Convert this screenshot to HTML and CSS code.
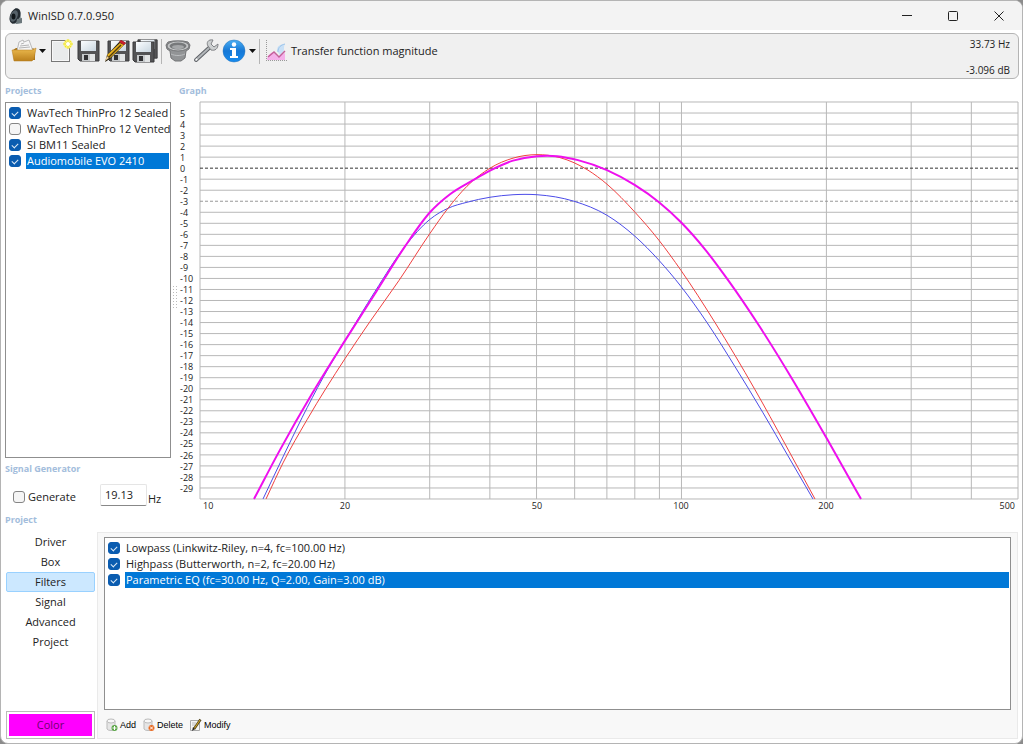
FILE: index.html
```html
<!DOCTYPE html>
<html lang="en">
<head>
<meta charset="utf-8">
<title>WinISD 0.7.0.950</title>
<link rel="stylesheet" href="styles.css">
</head>
<body>
<div class="window">
  <header class="titlebar">
    <svg class="app-icon" width="16" height="18" viewBox="0 0 16 18"><path d="M7 1l5 2 2 13-8 1z" fill="#9aa6aa"/><ellipse cx="7" cy="9" rx="5" ry="8" fill="#252c32" transform="rotate(22 7 9)"/><ellipse cx="6" cy="9" rx="3.500" ry="6" fill="#566169" transform="rotate(22 6 9)"/><ellipse cx="5.500" cy="9.500" rx="2" ry="3" fill="#11161a"/><path d="M9 12l5-1v5l-6 1z" fill="#6c787c"/></svg>
    <h1 class="title">WinISD 0.7.0.950</h1>
    <div class="window-controls">
      <button type="button" aria-label="Minimize"><svg width="12" height="12" viewBox="0 0 12 12"><path d="M1 5.500h10"/></svg></button>
      <button type="button" aria-label="Maximize"><svg width="12" height="12" viewBox="0 0 12 12"><rect x="1.500" y="1.500" width="9" height="9" rx="1"/></svg></button>
      <button type="button" aria-label="Close"><svg width="12" height="12" viewBox="0 0 12 12"><path d="M1.500 1.500l9 9m0-9l-9 9"/></svg></button>
    </div>
  </header>

  <div class="toolbar">
    <div class="tools">
      <button type="button" class="tool" aria-label="Open project">
        <svg width="26" height="26" viewBox="0 0 26 26"><defs><linearGradient id="gold" x1="0" y1="0" x2="0" y2="1"><stop offset="0" stop-color="#eebc50"/><stop offset="1" stop-color="#bb801c"/></linearGradient></defs><path d="M2 12l3-2h17l2 2v10H3z" fill="#a8751c"/><path d="M6 13l2-9 4-2 1 2 5-2 4 11z" fill="#f6f6f6" stroke="#b9b9b9"/><path d="M10 6l3-1M9 8l9-1M8 10l11-1" stroke="#b5b5b5"/><path d="M1 12h20l4-2-2 11-2 2H3z" fill="url(#gold)" stroke="#b57d20" stroke-width=".5"/></svg>
        <svg class="caret" width="7" height="4" viewBox="0 0 7 4"><path d="M0 0h7L3.500 4z"/></svg>
      </button>
      <button type="button" class="tool" aria-label="New project">
        <svg width="26" height="26" viewBox="0 0 26 26"><rect x="3.500" y="2.500" width="18" height="21" fill="#f7f7f7" stroke="#777"/><rect x="5" y="4" width="15" height="18" fill="#e9ebec"/><circle cx="20" cy="6" r="4.500" fill="#fbf27a"/><path d="M20 1v10M15 6h10M17 3l6 6m0-6l-6 6" stroke="#ece330"/><circle cx="20" cy="6" r="2" fill="#fff"/></svg>
      </button>
      <button type="button" class="tool" aria-label="Save">
        <svg width="26" height="26" viewBox="0 0 26 26"><defs><linearGradient id="label" x1="0" y1="0" x2="1" y2="1"><stop offset="0" stop-color="#fbfdff"/><stop offset="1" stop-color="#c9d6e0"/></linearGradient><symbol id="disk" viewBox="0 0 24 24"><path d="M1 2h21v20H3l-2-2z" fill="#535355" stroke="#3a3a3c"/><path d="M4 2h15v10H4z" fill="url(#label)"/><path d="M5 15h13v7H5z" fill="#c6c9cb"/><path d="M7 16h4v5H7z" fill="#303033"/><path d="M13 15h5v7h-5z" fill="#e2e4e5"/></symbol></defs><use href="#disk" x="1" y="1" width="24" height="24"/></svg>
      </button>
      <button type="button" class="tool" aria-label="Save as">
        <svg width="26" height="26" viewBox="0 0 26 26"><use href="#disk" x="3" y="1" width="24" height="24"/><path d="M17 2l5 3L6 21l-5 3 2-7z" fill="#2b2414"/><path d="M16 5l4 2L6 20l-3-3z" fill="#e8b321"/><path d="M17 7L5 19" stroke="#543c0e" stroke-width="1.500"/><path d="M17 2l5 3-2 2-5-3z" fill="#c91e2d"/><path d="M3 18l2 2-4 3z" fill="#f1d29a"/></svg>
      </button>
      <button type="button" class="tool" aria-label="Save all">
        <svg width="26" height="26" viewBox="0 0 26 26"><use href="#disk" x="5" y="0" width="22" height="22"/><use href="#disk" x="0" y="2" width="24" height="24"/></svg>
      </button>
      <span class="separator"></span>
      <button type="button" class="tool" aria-label="Driver editor">
        <svg width="26" height="26" viewBox="0 0 26 26"><path d="M1 7l2-3 5-1h10l5 1 2 3-1 4-3 2-1 7-4 3h-6l-4-3-1-7-3-2z" fill="#929496" stroke="#737476"/><ellipse cx="13" cy="8" rx="11" ry="5" fill="#c4c6c7" stroke="#757678"/><ellipse cx="13" cy="8" rx="8.500" ry="3.500" fill="#77797b"/><ellipse cx="13" cy="9" rx="6" ry="2" fill="#a5a7a9"/><path d="M6 16c4 2 10 2 14 0" fill="none" stroke="#bbbdbf"/></svg>
      </button>
      <button type="button" class="tool" aria-label="Options">
        <svg width="26" height="26" viewBox="0 0 26 26"><path d="M3 22L16 10" stroke="#606368" stroke-width="4" stroke-linecap="round"/><path d="M3 22L16 10" stroke="#b2b6b9" stroke-width="2" stroke-linecap="round"/><path d="M20 2c-5-1-7 3-5 6l3 4c4 1 7-1 7-6l-4 3-3-3z" fill="#cdd0d1" stroke="#808286"/><circle cx="3.500" cy="21.500" r="1" fill="#fff"/></svg>
      </button>
      <button type="button" class="tool" aria-label="Information">
        <svg width="26" height="26" viewBox="0 0 26 26"><defs><linearGradient id="blue" x1="0" y1="0" x2="0" y2="1"><stop offset="0" stop-color="#4baef2"/><stop offset=".5" stop-color="#1678d6"/><stop offset="1" stop-color="#168bee"/></linearGradient></defs><circle cx="13" cy="13" r="11" fill="url(#blue)" stroke="#2772bb" stroke-width=".5"/><circle cx="13" cy="6.500" r="2.200" fill="#fff"/><path d="M9 10h6v8h2v2H9v-2h2v-6H9z" fill="#fff"/></svg>
        <svg class="caret" width="7" height="4" viewBox="0 0 7 4"><path d="M0 0h7L3.500 4z"/></svg>
      </button>
      <span class="separator"></span>
      <button type="button" class="tool chart-kind">
        <svg width="26" height="26" viewBox="0 0 26 26"><path d="M4 21c1-4 3-6 6-7l5 5 7-4v7H4z" fill="#f5b0ea"/><path d="M14 13c0-5 3-7 8-7-2 3 0 6-2 8l-3 3z" fill="#c9e0f6"/><path d="M5 19l6-5 5 5 6-6" fill="none" stroke="#c4609a" stroke-width="1.500"/><path d="M15 14c0-5 3-7 7-8" fill="none" stroke="#9cc4ea"/><path d="M3.500 2v20M3 22.500h21" stroke="#999" stroke-dasharray="1 1"/></svg>
        <span>Transfer function magnitude</span>
      </button>
    </div>
    <div class="readout"><output>33.73 Hz</output><output>-3.096 dB</output></div>
  </div>

  <main class="content">
    <section class="upper">
      <div class="side">
        <h2 class="caption">Projects</h2>
        <div class="listbox projects">
          <label class="item"><input type="checkbox" class="check" checked><span>WavTech ThinPro 12 Sealed</span></label>
          <label class="item"><input type="checkbox" class="check"><span>WavTech ThinPro 12 Vented</span></label>
          <label class="item"><input type="checkbox" class="check" checked><span>SI BM11 Sealed</span></label>
          <label class="item selected"><input type="checkbox" class="check" checked><span>Audiomobile EVO 2410</span></label>
        </div>
        <h2 class="caption">Signal Generator</h2>
        <div class="generator">
          <label class="generate"><input type="checkbox" class="check"><span>Generate</span></label>
          <input type="text" id="frequency" class="frequency" value="19.13">
          <label for="frequency" class="unit">Hz</label>
        </div>
      </div>
      <div class="splitter"><span class="grip"></span></div>
      <div class="graph">
        <h2 class="caption graph-caption">Graph</h2>
        <div class="y-axis"><span>5</span><span>4</span><span>3</span><span>2</span><span>1</span><span>0</span><span>-1</span><span>-2</span><span>-3</span><span>-4</span><span>-5</span><span>-6</span><span>-7</span><span>-8</span><span>-9</span><span>-10</span><span>-11</span><span>-12</span><span>-13</span><span>-14</span><span>-15</span><span>-16</span><span>-17</span><span>-18</span><span>-19</span><span>-20</span><span>-21</span><span>-22</span><span>-23</span><span>-24</span><span>-25</span><span>-26</span><span>-27</span><span>-28</span><span>-29</span></div>
        <div class="plot"><svg id="plot" viewBox="200 102 818 396" preserveAspectRatio="none" role="img" aria-label="Transfer function magnitude"></svg></div>
        <div class="x-axis"><span class="f10">10</span><span class="f20">20</span><span class="f50">50</span><span class="f100">100</span><span class="f200">200</span><span class="f500">500</span></div>
      </div>
    </section>

    <section class="lower">
      <h2 class="caption">Project</h2>
      <div class="project">
        <nav class="tabs">
          <button type="button" class="tab">Driver</button>
          <button type="button" class="tab">Box</button>
          <button type="button" class="tab active">Filters</button>
          <button type="button" class="tab">Signal</button>
          <button type="button" class="tab">Advanced</button>
          <button type="button" class="tab">Project</button>
          <button type="button" class="color">Color</button>
        </nav>
        <div class="panel">
          <div class="listbox filters">
            <label class="item"><input type="checkbox" class="check" checked><span>Lowpass (Linkwitz-Riley, n=4, fc=100.00 Hz)</span></label>
            <label class="item"><input type="checkbox" class="check" checked><span>Highpass (Butterworth, n=2, fc=20.00 Hz)</span></label>
            <label class="item selected"><input type="checkbox" class="check" checked><span>Parametric EQ (fc=30.00 Hz, Q=2.00, Gain=3.00 dB)</span></label>
          </div>
          <div class="actions">
            <button type="button"><svg width="12" height="14" viewBox="0 0 12 14"><path d="M1 3v8c1 2 7 2 8 0V3" fill="#e6e6e6" stroke="#bbb"/><ellipse cx="5" cy="3" rx="4" ry="2" fill="#f8f8f8" stroke="#bbb"/><circle cx="8.500" cy="10" r="3" fill="#5aa646"/><path d="M6.500 10h4m-2-2v4" stroke="#fff"/></svg>Add</button>
            <button type="button"><svg width="12" height="14" viewBox="0 0 12 14"><path d="M1 3v8c1 2 7 2 8 0V3" fill="#e6e6e6" stroke="#bbb"/><ellipse cx="5" cy="3" rx="4" ry="2" fill="#f8f8f8" stroke="#bbb"/><circle cx="8.500" cy="10" r="3" fill="#e96c25"/><path d="M7 8.500l3 3m0-3l-3 3" stroke="#fff"/></svg>Delete</button>
            <button type="button"><svg width="12" height="14" viewBox="0 0 12 14"><path d="M.5 2.500h9v10h-9z" fill="#f5f5f5" stroke="#aaa"/><path d="M2 5h4M2 7h3" stroke="#bbb"/><path d="M10.500 1.500L4 11" stroke="#54471f" stroke-width="2.500"/><path d="M10 2L4 11" stroke="#d9aa22"/><path d="M3 9l2 2-3 2z" fill="#222"/></svg>Modify</button>
          </div>
        </div>
      </div>
    </section>
  </main>
</div>
<script src="graph.js"></script>
</body>
</html>
```
FILE: styles.css
```css
* { box-sizing: border-box; }

body {
  margin: 0;
  background: #8c8c8c;
  font: 11px/16px "Open Sans", "Noto Sans", sans-serif;
  color: #222;
}

button, input {
  margin: 0;
  padding: 0;
  font: inherit;
  color: inherit;
}

button {
  border: 0;
  background: none;
}

svg { display: block; flex: none; }

.window {
  display: flex;
  flex-direction: column;
  min-height: 100vh;
  border: 1px solid #b4b4b4;
  border-radius: 8px;
  background: #fff;
  overflow: hidden;
}

.titlebar {
  display: flex;
  align-items: center;
  height: 29px;
  padding-left: 7px;
  background: #f3f3f3;
}

.title {
  flex: 1;
  margin: 0 0 0 4px;
  font-size: 11px;
  font-weight: 400;
}

.window-controls { display: flex; }

.window-controls button {
  display: grid;
  place-items: center;
  width: 46px;
  height: 28px;
}

.window-controls path, .window-controls rect {
  fill: none;
  stroke: #222;
}

.toolbar {
  display: flex;
  justify-content: space-between;
  height: 46px;
  margin: 3px 3px 0 4px;
  border: 1px solid #b4b4b4;
  border-radius: 6px;
  background: #f0f0f0;
}

.tools {
  display: flex;
  align-items: center;
  gap: 2px;
  height: 34px;
  padding-left: 5px;
}

.tool {
  display: flex;
  align-items: center;
  gap: 2px;
}

.caret { fill: #111; }

.separator {
  width: 1px;
  height: 25px;
  margin: 0 1px;
  background: #b5b5b5;
}

.readout {
  display: flex;
  flex-direction: column;
  justify-content: space-between;
  padding: 2px 8px 0 0;
  font-size: 10px;
  text-align: right;
}

.content {
  display: flex;
  flex: 1;
  flex-direction: column;
  padding: 4px 4px 4px 4px;
}

.caption {
  margin: 0;
  font-size: 9px;
  font-weight: 700;
  line-height: 16px;
  color: #a3bddc;
}

.upper {
  display: flex;
  flex: 1;
}

.side {
  display: flex;
  flex-direction: column;
  width: 166px;
}

.listbox {
  border: 1px solid #8f8f8f;
  background: #fff;
  overflow: hidden;
}

.projects {
  flex: 1;
  margin: 3px 0;
  padding: 2px 1px 0 3px;
}

.item {
  display: flex;
  align-items: center;
  gap: 5px;
  height: 16px;
  white-space: nowrap;
}

.item span {
  flex: 1;
  padding-left: 1px;
}

.item.selected span {
  background: #0078d7;
  color: #fff;
}

.check {
  display: grid;
  flex: none;
  place-items: center;
  width: 12px;
  height: 12px;
  appearance: none;
  border: 1px solid #858585;
  border-radius: 3px;
  background: #f5f5f5;
}

.check:checked {
  border-color: #0a5cb0;
  background: #0a5cb0;
}

.check:checked::after {
  content: "";
  width: 5px;
  height: 3px;
  border: solid #dce9f6;
  border-width: 0 0 1px 1px;
  transform: rotate(-45deg);
}

.generator {
  display: flex;
  align-items: center;
  height: 35px;
  padding-left: 8px;
}

.generate {
  display: flex;
  align-items: center;
  gap: 3px;
  width: 87px;
  padding-top: 4px;
}

.frequency {
  width: 47px;
  height: 22px;
  padding-left: 4px;
  border: 1px solid #e5e5e5;
  border-bottom-color: #888;
  border-radius: 2px;
  background: #fff;
}

.unit { padding: 8px 0 0 1px; }

.splitter {
  display: grid;
  place-items: center;
  width: 8px;
}

.grip {
  width: 6px;
  height: 25px;
  background: radial-gradient(circle, #bbb 1px, transparent 1px) 0 0 / 3px 3px;
}

.graph {
  display: grid;
  flex: 1;
  grid-template: 19px 1fr 13px / 21px 1fr;
}

.graph-caption { grid-column: 1 / 3; }

.y-axis {
  display: flex;
  flex-direction: column;
  padding-left: 1px;
  font-size: 9px;
  line-height: 11px;
}

.y-axis::before, .y-axis::after {
  content: "";
  flex: 1 1 0;
}

.y-axis span {
  display: flex;
  flex: 2 1 0;
  align-items: center;
  min-height: 0;
}

.plot {
  display: flex;
  min-height: 396px;
}

.plot svg {
  flex: 1;
  width: 100%;
  height: 100%;
  overflow: visible;
}

.plot path {
  fill: none;
  vector-effect: non-scaling-stroke;
}

.grid { stroke: #b8b8b8; shape-rendering: crispEdges; }
.zero { stroke: #333; stroke-dasharray: 3 2; shape-rendering: crispEdges; }
.minus-three { stroke: #999; stroke-dasharray: 3 2; shape-rendering: crispEdges; }
.blue { stroke: #4c4ce8; }
.red { stroke: #f04040; }
.magenta { stroke: #ee10ee; stroke-width: 2; }

.x-axis {
  display: grid;
  grid-column: 2;
  grid-template-columns: 100fr 90fr 100fr 94fr 52fr 90fr 55fr 90fr 147fr;
  font-size: 9px;
  line-height: 13px;
  text-align: center;
}

.f10 { grid-column: 1; padding-left: 3px; text-align: left; }
.f20 { grid-column: 2; }
.f50 { grid-column: 4; }
.f100 { grid-column: 6; }
.f200 { grid-column: 8; }
.f500 { grid-column: 9; padding-right: 3px; text-align: right; }

.project {
  display: flex;
  gap: 2px;
  padding-top: 4px;
}

.tabs {
  display: flex;
  flex-direction: column;
  width: 90px;
}

.tab {
  height: 20px;
  margin-left: 1px;
  border: 1px solid transparent;
  border-radius: 2px;
}

.tab.active {
  border-color: #99d1ff;
  background: #cce8ff;
}

.color {
  height: 28px;
  margin: auto 0 0 1px;
  padding: 2px;
  border: 1px solid #bbb;
  background: #f0f content-box;
  color: #700070;
}

.panel {
  flex: 1;
  padding: 4px 6px 4px 6px;
  border: 1px solid #eaeaea;
  background: #f8f8f8;
}

.filters {
  height: 173px;
  padding: 2px 1px 0 3px;
}

.actions {
  display: flex;
  gap: 7px;
  padding: 7px 0 1px 2px;
}

.actions button {
  display: flex;
  align-items: center;
  gap: 2px;
  font: 9px/16px "Liberation Sans", sans-serif;
  color: #000;
}
```
FILE: graph.js
```javascript
const svg = document.getElementById("plot");
const left = 200, right = 1018, top0 = 102, bottom = 498;
const xOf = f => left + (right - left) * Math.log(f / 10) / Math.log(50);
const yOf = db => top0 + (6 - db) * (bottom - top0) / 36;

function add(d, name) {
  const path = document.createElementNS("http://www.w3.org/2000/svg", "path");
  path.setAttribute("d", d);
  path.setAttribute("class", name);
  svg.append(path);
}

let grid = "";
for (const f of [10, 20, 30, 40, 50, 60, 70, 80, 90, 100, 200, 300, 400, 500]) grid += `M${xOf(f)} ${top0}V${bottom}`;
for (let db = 6; db >= -30; db--) if (db !== 0 && db !== -3) grid += `M${left} ${yOf(db)}H${right}`;
add(grid, "grid");
add(`M${left} ${yOf(0)}H${right}`, "zero");
add(`M${left} ${yOf(-3)}H${right}`, "minus-three");

// Smooth curve through the sampled response points, with slopes weighted by spacing.
function curve(p) {
  const n = p.length;
  const rise = i => (p[i + 1][1] - p[i][1]) / (p[i + 1][0] - p[i][0]);
  const slope = p.map((q, i) => {
    if (i === 0) return rise(0);
    if (i === n - 1) return rise(n - 2);
    const before = q[0] - p[i - 1][0], after = p[i + 1][0] - q[0];
    return (rise(i - 1) * after + rise(i) * before) / (before + after);
  });
  let d = `M${p[0]}`;
  for (let i = 0; i < n - 1; i++) {
    const [x, y] = p[i], [u, v] = p[i + 1], h = (u - x) / 3;
    d += `C${x + h} ${y + slope[i] * h} ${u - h} ${v - slope[i + 1] * h} ${u} ${v}`;
  }
  return d;
}

add(curve([[263, 498], [283, 456], [302, 417], [323, 377], [345, 340], [375, 291], [405, 246], [430, 219], [448, 208], [467, 202], [490, 197], [513, 194.500], [537, 194.500], [574, 201], [607, 215], [635, 236], [659, 260], [681, 286], [707, 322], [735, 366], [763, 412], [788, 455], [813, 498]]), "blue");
add(curve([[266, 498], [283, 462], [307, 419], [345, 358], [370, 321], [399, 280], [430, 233], [448, 208], [467, 186], [490, 168], [513, 158], [537, 154.500], [560, 157.500], [588, 170], [607, 184], [635, 212], [659, 240], [681, 270], [715, 322], [755, 389], [785, 443], [815, 498]]), "red");
add(curve([[254, 498], [280, 449], [312, 393], [345, 340], [377, 290], [405, 246], [430, 212], [450, 194], [473, 180], [490, 170.500], [513, 160.500], [537, 156], [557, 156], [578, 160], [607, 170], [635, 185], [659, 202], [681, 222], [705, 249], [729, 281], [757, 322], [792, 378], [827, 438], [861, 498]]), "magenta");
```
